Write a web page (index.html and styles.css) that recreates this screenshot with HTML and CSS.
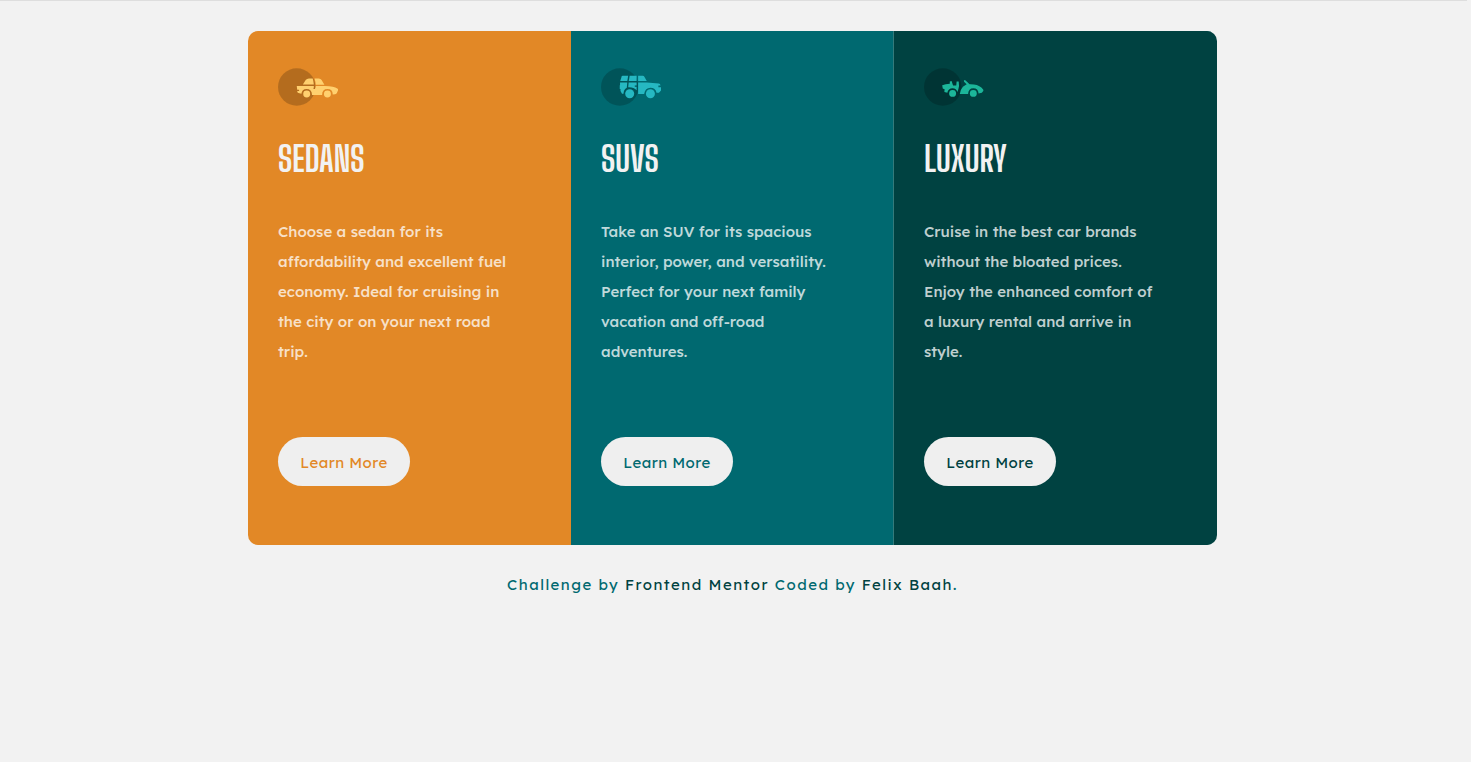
FILE: index.html
```html
<!DOCTYPE html>
<html lang="en">
<head>
  <meta charset="utf-8">
  <meta name="viewport" content="width=device-width, initial-scale=1">
  <title>3-column preview card</title>
  <link rel="stylesheet" href="styles.css">
</head>
<body>
  <div class="page">
    <main class="cards">
      <section class="card card-sedans">
        <svg class="icon" viewBox="0 0 64 40" aria-hidden="true">
          <circle cx="20" cy="20" r="20" fill="#000" fill-opacity=".2"/>
          <g fill="#ffd06f">
            <path d="M26.5 17.3 L29.5 12.4 Q30.8 10.8 33 10.8 H37 Q38 13.8 38.2 17.3 Z"/>
            <path d="M39 10.8 H43.5 Q45.5 10.8 46.5 12.4 L49.5 17.7 H40.2 Q40 13.8 39 10.8 Z"/>
            <path d="M20 19 H38.2 Q38.4 20.8 37.7 22.2 H39.4 Q40.2 20.8 40.2 19 H50 Q60 19.5 63.2 21.5 Q64.5 22.2 64 23.8 L62.5 27 Q61.5 28 58.4 28 Q58.2 22.2 52.7 22.2 Q47.2 22.2 47 28.4 H36.3 Q36 22.2 30.5 22.2 Q25.5 22.2 25 27.2 L21.8 26.5 Q20.4 26 20.6 24.3 H22.5 V22.8 H20.5 Z"/>
            <circle cx="30.6" cy="27.5" r="3.7"/>
            <circle cx="52.7" cy="27.5" r="3.7"/>
          </g>
        </svg>
        <h2 class="title">SEDANS</h2>
        <p class="text">Choose a sedan for its affordability and excellent fuel economy. Ideal for cruising in the city or on your next road trip.</p>
        <button class="more" type="button">Learn More</button>
      </section>
      <section class="card card-suvs">
        <svg class="icon" viewBox="0 0 64 40" aria-hidden="true">
          <circle cx="20" cy="20" r="20" fill="#000" fill-opacity=".2"/>
          <g fill="#26b8c2">
            <path d="M23 8 H29 L28 13.6 H20.5 L22 8.8 Q22.3 8 23 8 Z"/>
            <path d="M30.6 8 H38 V13.6 H29.6 Z"/>
            <path d="M39.6 8 H44.5 Q45.8 8 46.4 9.2 L48.8 13.6 H39.6 Z"/>
            <path d="M20.3 15.2 H28 L27.5 20.7 Q24.2 22.5 24 27.2 H22.4 L20.8 24.2 V22 H20 V18.2 H20.3 Z"/>
            <path d="M29.5 15.2 H38 V18.3 H36 V19.8 H38 V23.5 Q35 20 29 20.3 Z"/>
            <path d="M39.6 15.2 H49 L61.5 16.2 Q63.3 16.4 63.5 18.3 H61.2 V20.3 H64 V23.8 L61.8 26 H59.2 Q58.2 20.8 52.7 20.8 Q47.2 20.8 46 27.5 H39.6 Z"/>
            <circle cx="30.6" cy="27.2" r="4.8"/>
            <circle cx="52.7" cy="27.2" r="4.8"/>
          </g>
        </svg>
        <h2 class="title">SUVS</h2>
        <p class="text">Take an SUV for its spacious interior, power, and versatility. Perfect for your next family vacation and off-road adventures.</p>
        <button class="more" type="button">Learn More</button>
      </section>
      <section class="card card-luxury">
        <svg class="icon" viewBox="0 0 64 40" aria-hidden="true">
          <circle cx="20" cy="20" r="20" fill="#000" fill-opacity=".2"/>
          <g fill="#1cb69a">
            <path d="M19.4 18.2 Q23 16.6 27.5 16.6 L27.5 14 L29.4 13.7 L31 18.5 H34.4 L34.8 14.2 H37 L37.4 19 Q36.7 22.8 35.7 25.4 Q34.5 21.3 30.5 21.3 Q25.8 21.3 24.9 26.2 L21.7 25.4 L22 22.3 L20 21.5 Z"/>
            <path d="M42.5 13.2 Q43.4 12 44.4 13 L48.6 17 Q57.2 16.8 61.2 20.6 Q64 23.2 63.2 24.2 L61.7 26 L58.2 26.8 Q57.8 21.3 52.6 21.3 Q47.4 21.3 47 27.5 H38.2 Q38.8 22.8 41.5 19.8 L45.5 17 L42.7 14.4 Z"/>
            <circle cx="30.5" cy="26.8" r="3.7"/>
            <circle cx="52.6" cy="26.8" r="3.7"/>
          </g>
        </svg>
        <h2 class="title">LUXURY</h2>
        <p class="text">Cruise in the best car brands without the bloated prices. Enjoy the enhanced comfort of a luxury rental and arrive in style.</p>
        <button class="more" type="button">Learn More</button>
      </section>
    </main>
    <footer class="credit">
      Challenge by <a href="#mentor">Frontend Mentor</a> Coded by <a href="#author">Felix Baah</a>.
    </footer>
  </div>
</body>
</html>
```

FILE: styles.css
```css
* {
  box-sizing: border-box;
}

body {
  margin: 0;
  background: #f2f2f2;
  font-family: "Lexend Deca", Inter, "Open Sans", sans-serif;
  font-size: 15px;
}

.page {
  margin-right: 4px;
  padding: 30px 18px 30px 16px;
  border-top: 1px solid #dedede;
}

.cards {
  display: grid;
  grid-template-columns: repeat(3, 1fr);
  max-width: 969px;
  margin: 0 auto;
  border-radius: 10px;
  overflow: hidden;
}

.card {
  display: flex;
  flex-direction: column;
  align-items: flex-start;
  padding: 37px 30px 59px;
}

.card-sedans {
  background: #e28826;
  color: #e28826;
}

.card-suvs {
  background: #006970;
  color: #006970;
}

.card-luxury {
  background: #004241;
  color: #004241;
  box-shadow: -1px 0 #347b7b;
}

.icon {
  width: 60px;
  height: 38px;
}

.title {
  margin: 30px 0 36px;
  color: #f2f2f2;
  font-family: "Big Shoulders Display", "Roboto Condensed", Roboto, sans-serif;
  font-size: 35px;
  font-weight: 700;
  line-height: 45px;
}

.text {
  max-width: 236px;
  margin: 0 0 70px;
  color: rgba(255, 255, 255, 0.75);
  font-weight: 500;
  line-height: 30px;
}

.more {
  min-width: 132px;
  min-height: 49px;
  margin-top: auto;
  padding: 2px 22px 0;
  border: 0;
  border-radius: 25px;
  background: #efefef;
  color: inherit;
  font-family: inherit;
  font-size: 15px;
  font-weight: 400;
  letter-spacing: 0.03em;
  white-space: nowrap;
}

.credit {
  margin-top: 30px;
  color: #006970;
  font-weight: 400;
  line-height: 20px;
  letter-spacing: 0.1em;
  text-align: center;
}

.credit a {
  color: #004241;
  text-decoration: none;
}

@media (max-width: 760px) {
  .cards {
    grid-template-columns: 1fr;
  }
}
```
